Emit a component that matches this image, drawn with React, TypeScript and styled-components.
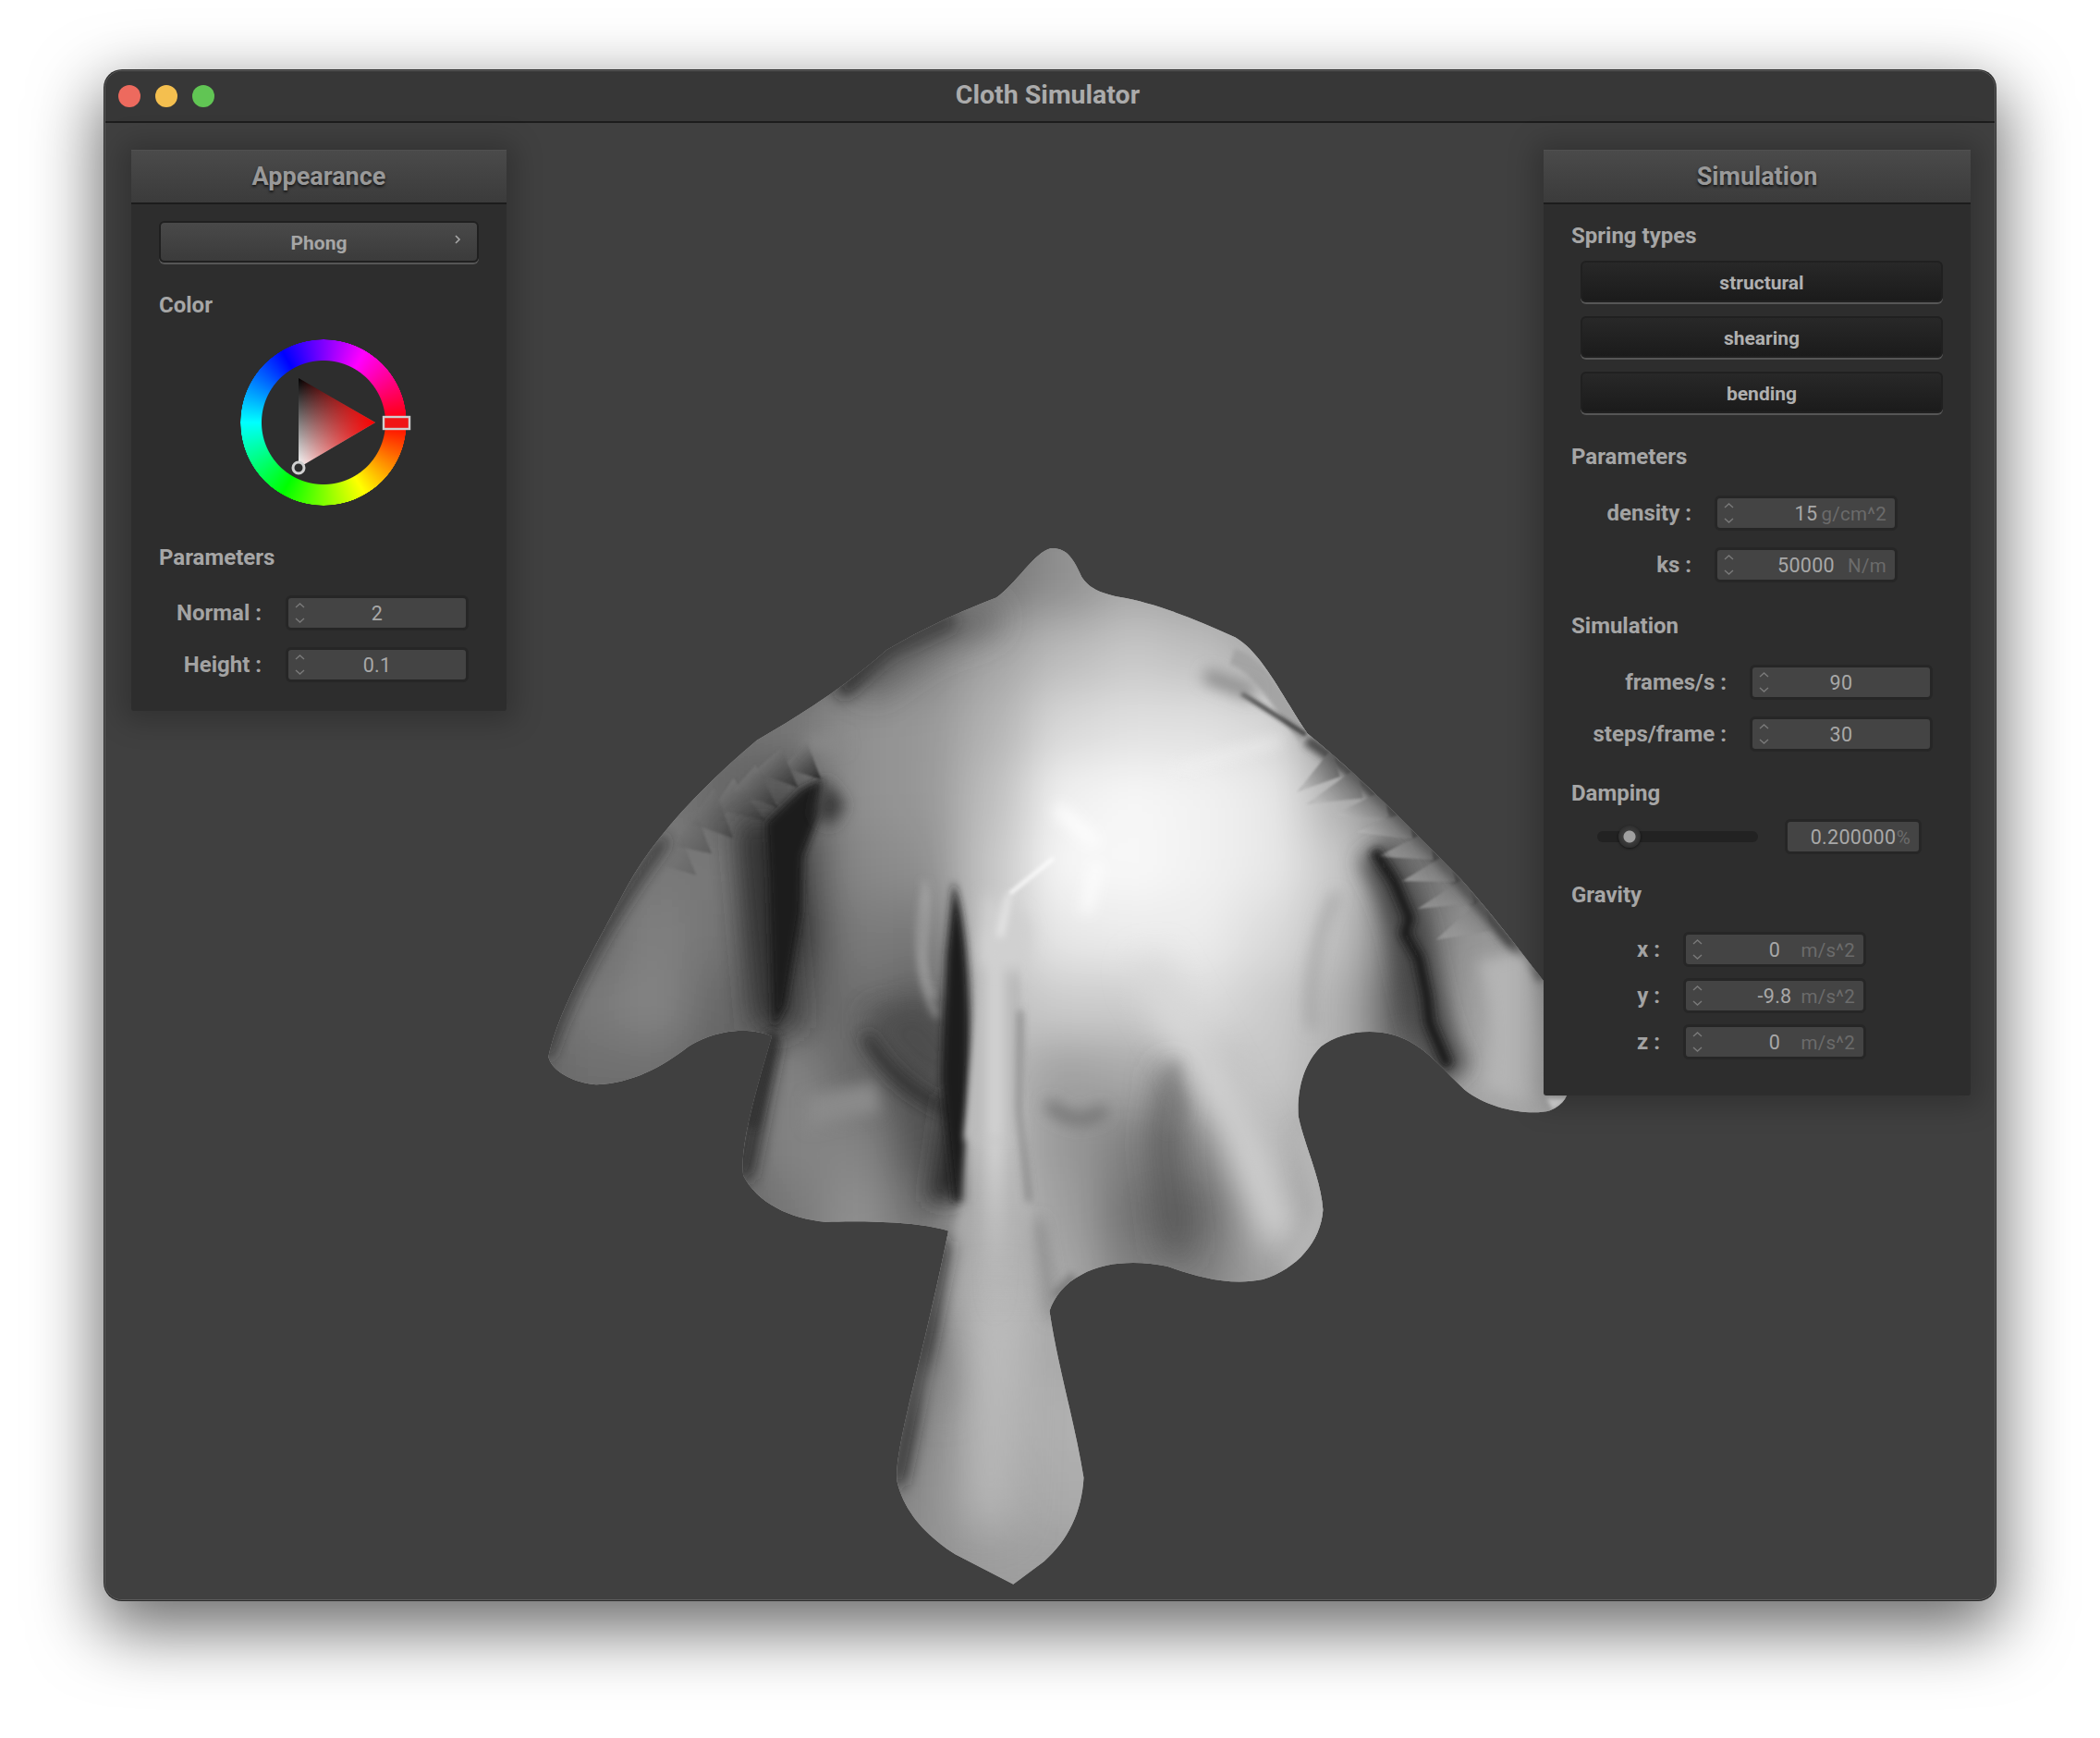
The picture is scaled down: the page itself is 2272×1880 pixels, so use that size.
import React from "react";
import styled, { createGlobalStyle } from "styled-components";

const Global = createGlobalStyle`
  html, body { margin: 0; padding: 0; background: #fff; }
  body { font-family: Roboto, "Liberation Sans", sans-serif; }
  #root { width: 2272px; height: 1880px; overflow: hidden; }
`;

const Page = styled.div`
  width: 2272px;
  height: 1880px;
  padding: 76px 0 0 113px;
  box-sizing: border-box;
  background: #fff;
`;
const Window = styled.div`
  width: 2046px;
  height: 1655px;
  box-sizing: border-box;
  display: flex;
  flex-direction: column;
  border-radius: 19px;
  overflow: hidden;
  background: #404040;
  box-shadow: 0 0 0 1px #2a2a2a, 0 26px 72px 6px rgba(0, 0, 0, 0.58);
  border: 1px solid #5c5c5c;
`;
const TitleBar = styled.header`
  position: relative;
  flex: none;
  height: 56px;
  box-sizing: border-box;
  display: flex;
  align-items: center;
  justify-content: center;
  background: #373737;
  border-bottom: 2px solid #1d1d1d;
`;
const Lights = styled.div`
  position: absolute;
  left: 14px;
  top: 15px;
  display: flex;
  gap: 16px;
`;
const Light = styled.span<{ $c: string }>`
  width: 24px;
  height: 24px;
  border-radius: 50%;
  background: ${(p) => p.$c};
`;
const Title = styled.h1`
  margin: 0 5px 2px 0;
  font: 700 28.5px/1 Roboto, sans-serif;
  color: #ababab;
`;
const Viewport = styled.main`
  position: relative;
  flex: 1;
  display: flex;
  justify-content: space-between;
  align-items: flex-start;
  padding: 29px 26px 0 28px;
  background: #404040;
`;
const Cloth = styled.svg`
  position: absolute;
  left: 0;
  top: 0;
  width: 2044px;
  height: 1598px;
`;
const Panel = styled.section<{ $w: number; $pb: number }>`
  position: relative;
  width: ${(p) => p.$w}px;
  box-sizing: border-box;
  padding-bottom: ${(p) => p.$pb}px;
  background: #2d2d2d;
  border-radius: 3px;
  box-shadow: 0 2px 30px 10px rgba(0, 0, 0, 0.22);
`;
const PanelHead = styled.div`
  height: 59px;
  box-sizing: border-box;
  display: flex;
  align-items: center;
  justify-content: center;
  background: linear-gradient(#4a4a4a, #3b3b3b);
  border-top: 1px solid #505050;
  border-bottom: 2px solid #1c1c1c;
  font: 700 27px/1 Roboto, sans-serif;
  color: #999;
  text-shadow: 0 2px 3px rgba(0, 0, 0, 0.7);
`;
const PanelBody = styled.div`
  padding: 0 0 0 30px;
  display: flex;
  flex-direction: column;
  align-items: flex-start;
`;
const Section = styled.h2<{ $mt: number }>`
  margin: ${(p) => p.$mt}px 0 0;
  height: 28px;
  font: 700 24px/28px Roboto, sans-serif;
  color: #a6a6a6;
`;
const ActionButton = styled.button<{ $dark?: boolean; $mt: number; $ml: number; $w: number }>`
  position: relative;
  width: ${(p) => p.$w}px;
  height: 45px;
  margin: ${(p) => p.$mt}px 0 2px ${(p) => p.$ml}px;
  padding: 3px 0 0;
  box-sizing: border-box;
  border: 2px solid #202020;
  border-radius: 6px;
  box-shadow: 0 2px 0 #565656;
  background: ${(p) => (p.$dark ? "linear-gradient(#282828, #1b1b1b)" : "linear-gradient(#494949, #3b3b3b)")};
  font: 700 21px/1 Roboto, sans-serif;
  color: ${(p) => (p.$dark ? "#b0b0b0" : "#a6a6a6")};
`;
const Chevron = styled.svg`
  position: absolute;
  right: 17px;
  top: 12px;
  width: 8px;
  height: 12px;
`;
const Wheel = styled.div`
  position: relative;
  width: 180px;
  height: 180px;
  margin: 23px 0 0 88px;
`;
const Ring = styled.div`
  position: absolute;
  inset: 0;
  border-radius: 50%;
  background: conic-gradient(from 90deg, #f00, #ff0, #0f0, #0ff, #00f, #f0f, #f00);
  -webkit-mask: radial-gradient(circle closest-side, transparent 66.5px, #000 67.5px, #000 89.5px, transparent 90px);
  mask: radial-gradient(circle closest-side, transparent 66.5px, #000 67.5px, #000 89.5px, transparent 90px);
`;
const WheelArt = styled.svg`
  position: absolute;
  left: -2px;
  top: -2px;
  width: 200px;
  height: 190px;
`;
const Row = styled.div<{ $mt: number; $lw: number; $gap: number }>`
  display: grid;
  grid-template-columns: ${(p) => p.$lw}px 198px;
  column-gap: ${(p) => p.$gap}px;
  align-items: center;
  margin-top: ${(p) => p.$mt}px;
`;
const FieldLabel = styled.label`
  font: 700 24px/1 Roboto, sans-serif;
  color: #a3a3a3;
  text-align: right;
  white-space: nowrap;
`;
const NumberBox = styled.div<{ $w?: number }>`
  width: ${(p) => p.$w ?? 198}px;
  height: 38px;
  box-sizing: border-box;
  display: grid;
  grid-template-columns: 1fr auto 1fr;
  align-items: center;
  background: #444;
  border: 3px solid #262626;
  border-radius: 6px;
  font: 400 21.5px/1 Roboto, sans-serif;
  letter-spacing: 0.3px;
  color: #a8a8a8;
`;
const Spinner = styled.svg`
  width: 11px;
  height: 22px;
  margin-left: 7px;
`;
const Value = styled.span`
  padding-top: 2px;
`;
const Unit = styled.span`
  justify-self: end;
  padding: 2px 9px 0 0;
  color: #6b6b6b;
  font-size: 20.5px;
  white-space: nowrap;
`;
const SliderRow = styled.div`
  display: flex;
  align-items: center;
  margin: 14px 0 0 28px;
`;
const Track = styled.div`
  position: relative;
  width: 174px;
  height: 12px;
  border-radius: 6px;
  background: #222;
  margin-right: 29px;
`;
const Knob = styled.div`
  position: absolute;
  left: 23px;
  top: -6px;
  width: 24px;
  height: 24px;
  border-radius: 50%;
  background: radial-gradient(circle, #a0a0a0 0 6px, #3c3c3c 7px, #2f2f2f 12px);
  box-shadow: 0 1px 3px rgba(0, 0, 0, 0.6);
`;

const spin = (
  <Spinner viewBox="0 0 11 22" fill="none" stroke="#7a7a7a" strokeWidth="1.4">
    <path d="M1 5 L5.5 1 L10 5" />
    <path d="M1 17 L5.5 21 L10 17" />
  </Spinner>
);

function Num({ v, unit, w, noSpin }: { v: string; unit?: string; w?: number; noSpin?: boolean }) {
  return (
    <NumberBox $w={w}>
      {noSpin ? <span /> : spin}
      <Value>{v}</Value>
      {unit ? <Unit>{unit}</Unit> : <span />}
    </NumberBox>
  );
}

/* low-frequency shading of the cloth, grey levels on a 100-unit grid (x = 0..1500, y = 0..1500) */
const shade: string[] = [
  "70 70 70 70 70 70 70 70 90 a0 a0 a0 a0 a0 a0 a0",
  "70 70 70 70 70 70 70 78 90 a8 a0 a0 90 90 90 90",
  "70 70 70 70 60 68 84 a4 bc c8 c0 a8 90 70 70 70",
  "70 70 70 70 78 90 98 b4 d8 e0 e0 d8 90 70 70 70",
  "70 70 78 68 50 90 98 c0 f0 f6 f2 e8 b0 70 70 70",
  "60 60 78 78 30 88 90 c8 f6 f8 f2 e8 c8 70 80 80",
  "60 68 80 74 28 7c 78 c8 e8 ec ec dc c0 58 98 90",
  "60 78 84 68 58 70 60 c0 cc cc dc cc b0 40 a0 a0",
  "60 70 70 60 84 64 48 b8 a0 a8 b8 c8 b0 60 a8 b0",
  "60 60 60 60 84 84 48 b8 98 80 88 b8 a0 90 a0 a0",
  "60 60 60 60 78 90 68 b8 a0 70 68 a8 a0 a0 a0 a0",
  "60 60 60 60 70 90 90 b8 a8 80 80 a0 a0 a0 a0 a0",
  "60 60 60 60 50 50 70 b0 a8 a8 a8 a8 a8 a8 a8 a8",
  "60 60 60 60 50 50 88 a8 b0 b0 b0 b0 b0 b0 b0 b0",
  "60 60 60 60 60 60 90 a0 ac ac ac ac ac ac ac ac",
  "60 60 60 60 60 90 90 9c a0 a0 a0 a0 a0 a0 a0 a0",
];

const teethL: number[][] = [
  [880, 250, 925, 370, 800, 330],
  [795, 268, 850, 395, 705, 345],
  [712, 322, 785, 462, 640, 405],
  [640, 365, 745, 505, 575, 462],
  [578, 395, 640, 560, 500, 510],
  [515, 470, 570, 610, 450, 585],
  [465, 550, 520, 680, 420, 650],
];
const teethR: number[][] = [
  [722, 330, 750, 420, 610, 470],
  [805, 390, 825, 490, 640, 510],
  [895, 462, 905, 552, 720, 550],
  [972, 530, 985, 625, 800, 600],
  [1038, 595, 1052, 690, 870, 680],
  [1100, 668, 1125, 762, 950, 760],
  [1160, 745, 1185, 830, 1000, 850],
  [1215, 810, 1240, 920, 1060, 950],
];

const outline =
  "M780 44 C800 44 810 52 825 85 C835 100 850 108 880 114 C930 122 990 145 1050 172 C1090 195 1120 260 1155 310 C1230 370 1300 440 1380 520 C1430 575 1480 640 1500 665 C1525 700 1535 750 1537 800 C1540 825 1535 842 1510 852 C1480 860 1420 850 1385 822 C1350 790 1325 755 1280 743 C1240 733 1200 742 1175 760 C1150 785 1140 820 1142 860 C1150 900 1175 950 1178 995 C1175 1040 1140 1080 1090 1095 C1040 1105 990 1090 950 1076 C910 1068 860 1068 825 1088 C800 1100 785 1120 778 1140 C790 1220 815 1300 828 1380 C825 1430 805 1470 770 1500 L725 1533 L640 1490 C600 1465 565 1430 555 1385 C550 1340 590 1220 630 1025 C590 1012 510 1010 450 1012 C400 1008 350 985 330 945 C325 900 350 820 372 745 C340 732 290 735 250 760 C210 790 170 812 115 815 C80 812 50 795 45 775 C60 710 95 650 160 530 C200 460 260 395 350 320 C410 285 470 250 540 190 C600 155 660 130 700 115 C730 95 755 50 780 44 Z";

const Blur = ({ id, s }: { id: string; s: number }) => (
  <filter id={id} filterUnits="userSpaceOnUse" x="-1000" y="-1000" width="5000" height="5000">
    <feGaussianBlur stdDeviation={s} />
  </filter>
);

function ClothArt() {
  return (
    <Cloth viewBox="114 133 2044 1598">
      <defs>
        <clipPath id="sil">
          <path transform="translate(560 560) scale(.7397 .7526)" d={outline} />
        </clipPath>
        <Blur id="b3" s={3} />
        <Blur id="b6" s={6} />
        <Blur id="b12" s={12} />
        <Blur id="b24" s={24} />
        <Blur id="b34" s={34} />
        <Blur id="b45" s={45} />
        <linearGradient id="toothL" x1="0" y1="0" x2="1" y2="1">
          <stop offset="0" stopColor="#949494" />
          <stop offset="1" stopColor="#2c2c2c" />
        </linearGradient>
        <linearGradient id="toothR" x1="1" y1="0" x2="0" y2="0.6">
          <stop offset="0" stopColor="#484848" />
          <stop offset="1" stopColor="#b8b8b8" />
        </linearGradient>
        <linearGradient id="stripFade" gradientUnits="userSpaceOnUse" x1="0" y1="1300" x2="0" y2="1880">
          <stop offset="0" stopColor="#bababa" />
          <stop offset="1" stopColor="#ababab" stopOpacity="0" />
        </linearGradient>
        <linearGradient id="stripCore" gradientUnits="userSpaceOnUse" x1="0" y1="1300" x2="0" y2="1880">
          <stop offset="0" stopColor="#d8d8d8" />
          <stop offset="1" stopColor="#b8b8b8" stopOpacity="0" />
        </linearGradient>
      </defs>
      <g clipPath="url(#sil)">
        <rect x="550" y="580" width="1180" height="1150" fill="#a4a4a4" />
        <g transform="translate(560 560) scale(.7397 .7526)">
          <g filter="url(#b34)">
            {shade.map((row, j) =>
              row.split(" ").map((h, i) => (
                <rect key={`${i}-${j}`} x={i * 100 - 51} y={j * 100 - 51} width="102" height="102" fill={`#${h}${h}${h}`} />
              ))
            )}
          </g>
          {/* shoulder edge */}
          <path d="M470 252 L540 190 L640 145" stroke="#1e1e1e" strokeWidth="22" fill="none" filter="url(#b12)" />
          <path d="M505 240 L600 175 L700 140" stroke="#555" strokeWidth="30" fill="none" filter="url(#b24)" />
          {/* lower-left skirt edge */}
          <path d="M330 950 L372 745" stroke="#222" strokeWidth="22" fill="none" filter="url(#b12)" />
          {/* pendant edges */}
          <path d="M628 1040 L555 1390" stroke="#1e1e1e" strokeWidth="18" fill="none" filter="url(#b12)" />
          <path d="M600 1250 L640 1250" stroke="#888" strokeWidth="60" fill="none" filter="url(#b24)" />
          <path d="M700 1120 L690 1450" stroke="#c2c2c2" strokeWidth="50" fill="none" filter="url(#b34)" />
          <path d="M760 1010 L782 1150" stroke="#747474" strokeWidth="10" fill="none" filter="url(#b12)" />
          <path d="M815 1090 L785 1120" stroke="#7c7c7c" strokeWidth="14" fill="none" filter="url(#b6)" />
          {/* lower-right folds */}
          <path d="M960 790 L945 900 L965 1060" stroke="#505050" strokeWidth="30" fill="none" filter="url(#b24)" />
          <path d="M920 640 L1050 870 L1120 1040" stroke="#d8d8d8" strokeWidth="44" fill="none" filter="url(#b24)" />
          <path d="M1150 880 L1178 1000 L1130 1085" stroke="#b8b8b8" strokeWidth="26" fill="none" filter="url(#b12)" />
        </g>
        {/* left wing */}
        <g transform="translate(580 720) scale(.3333)">
          <path d="M30 1270 C120 1000 270 760 420 560" stroke="#262626" strokeWidth="30" fill="none" filter="url(#b24)" />
          <path d="M720 500 L780 1180" stroke="#303030" strokeWidth="140" fill="none" filter="url(#b45)" />
          {teethL.map((t, i) => (
            <polygon key={i} points={t.join(",")} fill="url(#toothL)" opacity={0.95 - i * 0.12} filter="url(#b3)" />
          ))}
          <path d="M930 365 L860 400 L745 510 L755 700 L770 1180 L810 1100 L860 800 L865 620 L920 480 Z" fill="#1a1a1a" filter="url(#b12)" />
          <path d="M935 365 L1005 450 L960 520 L905 490 Z" fill="#3a3a3a" filter="url(#b24)" />
          <path d="M880 250 L1000 250" stroke="#8a8a8a" strokeWidth="40" fill="none" filter="url(#b24)" />
          <path d="M1080 1120 C1110 1250 1250 1350 1390 1420 L1390 1100 Z" fill="#505050" opacity="0.7" filter="url(#b45)" />
          <path d="M1260 700 C1290 860 1225 920 1290 1080" stroke="#aaa" strokeWidth="14" fill="none" filter="url(#b12)" />
          <path d="M880 1400 L1100 1350 L1120 1450 L880 1500 Z" fill="#8a8a8a" filter="url(#b24)" />
          <path d="M770 1190 L700 1500" stroke="#333" strokeWidth="36" fill="none" filter="url(#b12)" />
        </g>
        {/* centre */}
        <g transform="translate(900 800) scale(.3333)">
          <path d="M100 900 C170 1040 280 1130 430 1180 L430 1000 L300 840 Z" fill="#4c4c4c" opacity="0.7" filter="url(#b45)" />
          <path d="M110 960 C180 1080 270 1160 420 1220" stroke="#2c2c2c" strokeWidth="34" fill="none" filter="url(#b24)" />
          <path d="M360 1150 L440 1150 L425 1500 L310 1500 Z" fill="#2a2a2a" filter="url(#b34)" />
          <path d="M395 460 C440 600 450 800 445 1000 L435 1500 L395 1500 L355 1100 L370 700 Z" fill="#1b1b1b" filter="url(#b12)" />
          <path d="M490 720 L600 720 L640 1500 L700 1900 L330 1900 L420 1500 Z" fill="url(#stripFade)" filter="url(#b12)" />
          <path d="M490 720 L600 720 L625 1300 L430 1300 Z" fill="#bababa" filter="url(#b12)" />
          <path d="M530 620 L530 1300" stroke="#d8d8d8" strokeWidth="50" fill="none" filter="url(#b24)" />
          <path d="M505 1300 h50 v580 h-50 Z" fill="url(#stripCore)" filter="url(#b24)" />
          <path d="M612 880 L608 1200 L640 1500" stroke="#666" strokeWidth="10" fill="none" filter="url(#b12)" />
          <path d="M495 500 L480 730 L625 760 L650 620 L620 560 Z" fill="#d0d0d0" filter="url(#b24)" />
          <path d="M578 500 L720 385" stroke="#fff" strokeWidth="10" fill="none" filter="url(#b6)" />
          <path d="M575 500 L545 640" stroke="#f2f2f2" strokeWidth="14" fill="none" filter="url(#b12)" />
          <path d="M730 220 L860 340" stroke="#fff" strokeWidth="36" fill="none" filter="url(#b24)" />
          <path d="M862 400 L825 560" stroke="#fff" strokeWidth="30" fill="none" filter="url(#b24)" />
          <path d="M700 1180 C760 1240 820 1250 890 1200" stroke="#707070" strokeWidth="36" fill="none" filter="url(#b24)" />
          <path d="M300 500 C260 700 300 820 340 900" stroke="#a8a8a8" strokeWidth="12" fill="none" filter="url(#b12)" />
          <path d="M1120 1050 L1100 1100 L1130 1200 L1090 1260" stroke="#7a7a7a" strokeWidth="20" fill="none" filter="url(#b24)" />
        </g>
        {/* right wing */}
        <g transform="translate(1200 700) scale(.3333)">
          <path d="M640 300 C800 400 1050 640 1400 1080" stroke="#3c3c3c" strokeWidth="34" fill="none" filter="url(#b12)" />
          <path d="M860 660 C920 760 970 880 990 1000 C1020 1150 1050 1290 1120 1390" stroke="#444" strokeWidth="120" fill="none" filter="url(#b34)" />
          {teethR.map((t, i) => (
            <polygon key={i} points={t.join(",")} fill="url(#toothR)" opacity={0.95 - i * 0.08} filter="url(#b3)" />
          ))}
          <path d="M1280 1000 C1320 1150 1340 1300 1300 1450" stroke="#b4b4b4" strokeWidth="170" fill="none" filter="url(#b24)" />
          <path d="M860 660 L925 760 L975 880 L960 930 L1005 1010 L1030 1130 L1040 1220 L1100 1360" stroke="#1a1a1a" strokeWidth="34" fill="none" filter="url(#b12)" />
          <path d="M660 1240 C640 1100 680 900 740 800" stroke="#999" strokeWidth="20" fill="none" filter="url(#b24)" />
          <path d="M400 30 C500 60 560 200 640 290" stroke="#a4a4a4" strokeWidth="54" fill="none" filter="url(#b6)" />
          <path d="M430 150 L640 285" stroke="#2c2c2c" strokeWidth="12" fill="none" filter="url(#b6)" />
          <path d="M310 90 L470 150" stroke="#868686" strokeWidth="44" fill="none" filter="url(#b24)" />
          <path d="M560 300 L220 400" stroke="#f4f4f4" strokeWidth="24" fill="none" filter="url(#b24)" opacity="0.7" />
          <path d="M1420 1465 L1500 1465 L1440 1500 Z" fill="#dcdcdc" filter="url(#b6)" />
        </g>
      </g>
    </Cloth>
  );
}

export default function App() {
  return (
    <Page>
      <Global />
      <Window>
        <TitleBar>
          <Lights>
            <Light $c="#ed6a5e" />
            <Light $c="#f4bf4f" />
            <Light $c="#61c554" />
          </Lights>
          <Title>Cloth Simulator</Title>
        </TitleBar>
        <Viewport>
          <ClothArt />
          <Panel $w={406} $pb={31}>
            <PanelHead>Appearance</PanelHead>
            <PanelBody>
              <ActionButton $mt={18} $ml={0} $w={346}>
                Phong
                <Chevron viewBox="0 0 8 12" fill="none" stroke="#a8a8a8" strokeWidth="1.6">
                  <path d="M2 2 L6 6 L2 10" />
                </Chevron>
              </ActionButton>
              <Section $mt={30}>Color</Section>
              <Wheel>
                <Ring />
                <WheelArt viewBox="-2 -2 200 190">
                  <defs>
                    <linearGradient id="tv" x1="0" y1="0" x2="0" y2="1">
                      <stop offset="0" stopColor="#000" />
                      <stop offset="1" stopColor="#fff" />
                    </linearGradient>
                    <linearGradient id="th" x1="0" y1="0" x2="1" y2="0">
                      <stop offset="0" stopColor="#f00" stopOpacity="0" />
                      <stop offset="1" stopColor="#f00" stopOpacity="1" />
                    </linearGradient>
                  </defs>
                  <polygon points="63,42 146,90 63,139" fill="url(#tv)" />
                  <polygon points="63,42 146,90 63,139" fill="url(#th)" />
                  <rect x="155" y="84" width="28" height="13" fill="#f01616" stroke="#cfcfcf" strokeWidth="2.4" />
                  <circle cx="63" cy="139" r="6" fill="#2d2d2d" stroke="#d0d0d0" strokeWidth="3" />
                </WheelArt>
              </Wheel>
              <Section $mt={42}>Parameters</Section>
              <Row $mt={27} $lw={111} $gap={26}>
                <FieldLabel>Normal :</FieldLabel>
                <Num v="2" />
              </Row>
              <Row $mt={18} $lw={111} $gap={26}>
                <FieldLabel>Height :</FieldLabel>
                <Num v="0.1" />
              </Row>
            </PanelBody>
          </Panel>
          <Panel $w={462} $pb={39}>
            <PanelHead>Simulation</PanelHead>
            <PanelBody>
              <Section $mt={20}>Spring types</Section>
              <ActionButton $dark $mt={13} $ml={10} $w={392}>structural</ActionButton>
              <ActionButton $dark $mt={13} $ml={10} $w={392}>shearing</ActionButton>
              <ActionButton $dark $mt={13} $ml={10} $w={392}>bending</ActionButton>
              <Section $mt={31}>Parameters</Section>
              <Row $mt={28} $lw={130} $gap={25}>
                <FieldLabel>density :</FieldLabel>
                <Num v="15" unit="g/cm^2" />
              </Row>
              <Row $mt={18} $lw={130} $gap={25}>
                <FieldLabel>ks :</FieldLabel>
                <Num v="50000" unit="N/m" />
              </Row>
              <Section $mt={33}>Simulation</Section>
              <Row $mt={28} $lw={168} $gap={25}>
                <FieldLabel>frames/s :</FieldLabel>
                <Num v="90" />
              </Row>
              <Row $mt={18} $lw={168} $gap={25}>
                <FieldLabel>steps/frame :</FieldLabel>
                <Num v="30" />
              </Row>
              <Section $mt={31}>Damping</Section>
              <SliderRow>
                <Track>
                  <Knob />
                </Track>
                <Num v="0.200000" unit="%" w={148} noSpin />
              </SliderRow>
              <Section $mt={30}>Gravity</Section>
              <Row $mt={26} $lw={96} $gap={25}>
                <FieldLabel>x :</FieldLabel>
                <Num v="0" unit="m/s^2" />
              </Row>
              <Row $mt={12} $lw={96} $gap={25}>
                <FieldLabel>y :</FieldLabel>
                <Num v="-9.8" unit="m/s^2" />
              </Row>
              <Row $mt={12} $lw={96} $gap={25}>
                <FieldLabel>z :</FieldLabel>
                <Num v="0" unit="m/s^2" />
              </Row>
            </PanelBody>
          </Panel>
        </Viewport>
      </Window>
    </Page>
  );
}
